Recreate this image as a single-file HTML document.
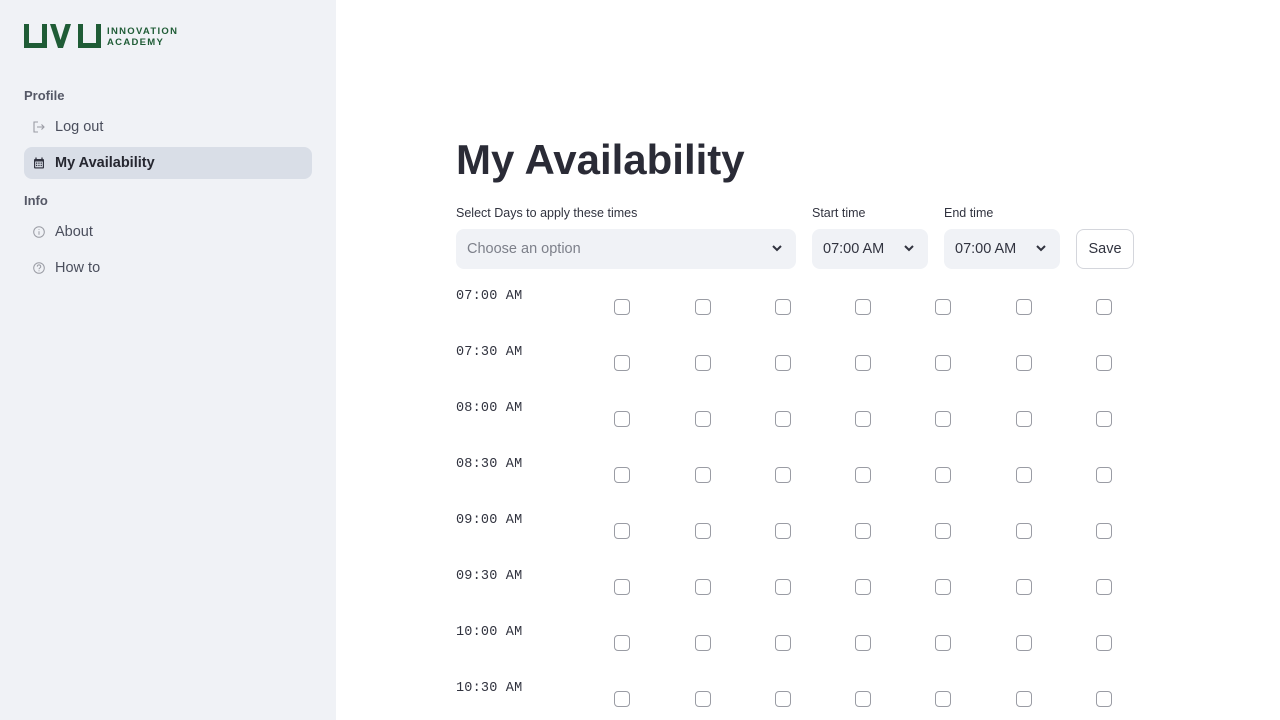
<!DOCTYPE html>
<html><head><meta charset="utf-8"><style>
*{margin:0;padding:0;box-sizing:border-box}
body{width:1280px;height:720px;overflow:hidden;background:#fff;font-family:"Liberation Sans",sans-serif;position:relative}
.sb{position:absolute;left:0;top:0;width:336px;height:720px;background:#f0f2f6}
.sec{position:absolute;left:24px;font-size:13px;font-weight:bold;color:#555866}
.item{position:absolute;left:24px;width:288px;height:32px;border-radius:8px;font-size:14.5px;color:#4a4e5c;line-height:33px;padding-left:31px}
.item svg{position:absolute;left:9px;top:10px}
.act{background:#d9dee7;color:#262730;font-weight:bold}
h1{position:absolute;left:456px;top:136px;font-size:42px;font-weight:bold;color:#2a2b36;letter-spacing:0;white-space:nowrap}
.lbl{position:absolute;top:206px;font-size:12.5px;color:#31333f}
.sel{position:absolute;top:229px;height:40px;background:#f0f2f6;border-radius:8px;font-size:14.5px;color:#31333f;line-height:40px;padding-left:11px}
.sel svg{position:absolute;right:14px;top:15px}
.btn{position:absolute;left:1076px;top:229px;width:58px;height:40px;border:1px solid #d4d6dc;border-radius:8px;font-size:14.5px;color:#31333f;text-align:center;line-height:38px}
.t{position:absolute;left:456px;font-family:"Liberation Mono",monospace;font-size:13.5px;letter-spacing:0.2px;color:#31333f}
.cb{position:absolute;width:16px;height:16px;border:1px solid #9a9ca4;border-radius:4px;background:#fff}
</style></head><body>
<div class="sb">
<svg style="position:absolute;left:24px;top:24px" width="78" height="24" viewBox="0 0 78 24">
<path fill="#1f5c36" d="M0 0h5v19h13V0h5v24H0z"/>
<path fill="#1f5c36" d="M26 0h5.5l5 16 5-16H47l-8 24h-5z"/>
<path fill="#1f5c36" d="M54 0h5v19h13V0h5v24H54z"/>
</svg>
<div style="position:absolute;left:107px;top:27px;font-size:9.5px;font-weight:bold;color:#1f5c36;letter-spacing:1.3px;line-height:10.5px">INNOVATION<br>ACADEMY</div>
<div class="sec" style="top:88px">Profile</div>
<div class="item" style="top:111px"><svg width="12" height="12" viewBox="0 0 12 12" fill="none" stroke="#9a9ca4" stroke-width="1.1"><path d="M5 1H1v10h4M4 6h7M8.5 3.5L11 6 8.5 8.5"/></svg>Log out</div>
<div class="item act" style="top:147px"><svg width="12" height="12" viewBox="0 0 12 12"><rect x="1" y="2" width="10" height="9.5" rx="1" fill="#31333f"/><rect x="2.2" y="4.5" width="7.6" height="5.8" fill="#d9dee7"/><path d="M3 0.5v2.5M9 0.5v2.5" stroke="#31333f" stroke-width="1.3"/><g fill="#31333f"><rect x="3" y="5.5" width="1.3" height="1.3"/><rect x="5.3" y="5.5" width="1.3" height="1.3"/><rect x="7.6" y="5.5" width="1.3" height="1.3"/><rect x="3" y="7.8" width="1.3" height="1.3"/><rect x="5.3" y="7.8" width="1.3" height="1.3"/><rect x="7.6" y="7.8" width="1.3" height="1.3"/></g></svg>My Availability</div>
<div class="sec" style="top:193px">Info</div>
<div class="item" style="top:216px"><svg width="12" height="12" viewBox="0 0 12 12" fill="none" stroke="#9a9ca4" stroke-width="1"><circle cx="6" cy="6" r="5.3"/><path d="M6 5.2v3.5M6 3.2v.8"/></svg>About</div>
<div class="item" style="top:252px"><svg width="12" height="12" viewBox="0 0 12 12" fill="none" stroke="#9a9ca4" stroke-width="1"><circle cx="6" cy="6" r="5.3"/><path d="M4.3 4.6a1.7 1.7 0 1 1 2.4 1.5c-.5.3-.7.6-.7 1.2M6 8.4v.8"/></svg>How to</div>
</div>
<h1>My Availability</h1>
<div class="lbl" style="left:456px">Select Days to apply these times</div>
<div class="lbl" style="left:812px">Start time</div>
<div class="lbl" style="left:944px">End time</div>
<div class="sel" style="left:456px;width:340px;color:#7d808a">Choose an option<svg width="10" height="8" viewBox="0 0 10 8"><path d="M1 2l4 4 4-4" fill="none" stroke="#31333f" stroke-width="2"/></svg></div>
<div class="sel" style="left:812px;width:116px">07:00 AM<svg width="10" height="8" viewBox="0 0 10 8"><path d="M1 2l4 4 4-4" fill="none" stroke="#31333f" stroke-width="2"/></svg></div>
<div class="sel" style="left:944px;width:116px">07:00 AM<svg width="10" height="8" viewBox="0 0 10 8"><path d="M1 2l4 4 4-4" fill="none" stroke="#31333f" stroke-width="2"/></svg></div>
<div class="btn">Save</div>
<div id="g"></div>
<script>
var times=["07:00 AM","07:30 AM","08:00 AM","08:30 AM","09:00 AM","09:30 AM","10:00 AM","10:30 AM"];
var xs=[622,703,783,863,943,1024,1104],h="";
times.forEach(function(t,i){var y=289+56*i;h+='<div class="t" style="top:'+y+'px">'+t+'</div>';
xs.forEach(function(x){h+='<div class="cb" style="left:'+(x-8)+'px;top:'+(y+10)+'px"></div>'});});
document.getElementById("g").innerHTML=h;
</script>
</body></html>
